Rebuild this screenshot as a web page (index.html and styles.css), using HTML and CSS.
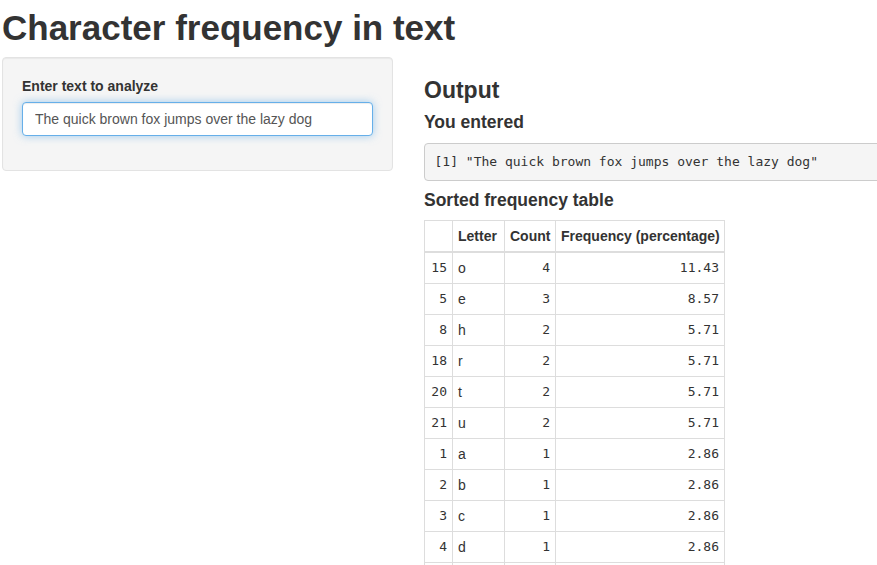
FILE: index.html
```html
<!DOCTYPE html>
<html lang="en">
<head>
<meta charset="utf-8">
<title>Character frequency in text</title>
<link rel="stylesheet" href="styles.css">
</head>
<body>
<div class="page">
  <h1 class="title">Character frequency in text</h1>
  <div class="row">
    <div class="sidebar">
      <div class="well">
        <div class="form-group">
          <label class="control-label" for="txt">Enter text to analyze</label>
          <input id="txt" class="form-control" type="text" value="The quick brown fox jumps over the lazy dog">
        </div>
      </div>
    </div>
    <div class="main">
      <h3 class="h-output">Output</h3>
      <h4 class="h-sub">You entered</h4>
      <pre class="verbatim">[1] "The quick brown fox jumps over the lazy dog"</pre>
      <h4 class="h-sub h-table">Sorted frequency table</h4>
      <table class="freq">
        <colgroup>
          <col class="c-idx"><col class="c-let"><col class="c-cnt"><col class="c-frq">
        </colgroup>
        <thead>
          <tr><th></th><th class="left">Letter</th><th class="right">Count</th><th class="right">Frequency (percentage)</th></tr>
        </thead>
        <tbody>
          <tr><td class="num">15</td><td>o</td><td class="num">4</td><td class="num">11.43</td></tr>
          <tr><td class="num">5</td><td>e</td><td class="num">3</td><td class="num">8.57</td></tr>
          <tr><td class="num">8</td><td>h</td><td class="num">2</td><td class="num">5.71</td></tr>
          <tr><td class="num">18</td><td>r</td><td class="num">2</td><td class="num">5.71</td></tr>
          <tr><td class="num">20</td><td>t</td><td class="num">2</td><td class="num">5.71</td></tr>
          <tr><td class="num">21</td><td>u</td><td class="num">2</td><td class="num">5.71</td></tr>
          <tr><td class="num">1</td><td>a</td><td class="num">1</td><td class="num">2.86</td></tr>
          <tr><td class="num">2</td><td>b</td><td class="num">1</td><td class="num">2.86</td></tr>
          <tr><td class="num">3</td><td>c</td><td class="num">1</td><td class="num">2.86</td></tr>
          <tr><td class="num">4</td><td>d</td><td class="num">1</td><td class="num">2.86</td></tr>
          <tr><td class="num">6</td><td>f</td><td class="num">1</td><td class="num">2.86</td></tr>
          <tr><td class="num">7</td><td>g</td><td class="num">1</td><td class="num">2.86</td></tr>
          <tr><td class="num">9</td><td>i</td><td class="num">1</td><td class="num">2.86</td></tr>
          <tr><td class="num">10</td><td>j</td><td class="num">1</td><td class="num">2.86</td></tr>
        </tbody>
      </table>
    </div>
  </div>
</div>
</body>
</html>
```

FILE: styles.css
```css
html, body {
  margin: 0;
  padding: 0;
  overflow: hidden;
  background: #fff;
}
body {
  font-family: "Liberation Sans", Arial, sans-serif;
  font-size: 14px;
  line-height: 1.42857;
  color: #333;
}
.page {
  padding-left: 2px;
  width: 1240px;
}
.title {
  font-size: 35px;
  font-weight: 700;
  line-height: 39.6px;
  margin: 8px 0 9px;
}
.row {
  display: flex;
  align-items: flex-start;
  gap: 31px;
}
.sidebar {
  width: 391px;
  flex: none;
}
.well {
  background: #f5f5f5;
  border: 1px solid #e3e3e3;
  border-radius: 4px;
  box-shadow: inset 0 1px 1px rgba(0,0,0,.05);
  padding: 19px;
}
.form-group {
  margin-bottom: 15px;
}
.control-label {
  display: inline-block;
  font-weight: 700;
  margin-bottom: 5px;
}
.form-control {
  display: block;
  box-sizing: border-box;
  width: 100%;
  height: 34px;
  padding: 6px 12px;
  font-family: "Liberation Sans", Arial, sans-serif;
  font-size: 14px;
  line-height: 20px;
  color: #555;
  background: #fff;
  border: 1px solid #66afe9;
  border-radius: 4px;
  outline: 0;
  box-shadow: inset 0 1px 1px rgba(0,0,0,.075), 0 0 8px rgba(102,175,233,.6);
}
.main {
  width: 812px;
  flex: none;
}
.h-output {
  font-size: 23px;
  font-weight: 700;
  line-height: 26.4px;
  margin: 20px 0 10px;
}
.h-sub {
  font-size: 17.5px;
  font-weight: 700;
  line-height: 19.8px;
  margin: 10px 0 10px;
}
.h-table {
  margin-bottom: 9px;
}
.verbatim {
  margin: 0 0 10px;
  padding: 9.5px;
  font-family: "DejaVu Sans Mono", Menlo, monospace;
  font-size: 13px;
  line-height: 17px;
  color: #333;
  background: #f5f5f5;
  border: 1px solid #ccc;
  border-radius: 4px;
  white-space: pre;
}
.freq {
  border-collapse: collapse;
  border-spacing: 0;
  table-layout: fixed;
  width: 300px;
  border: 1px solid #ddd;
}
.c-idx { width: 28px; }
.c-let { width: 52px; }
.c-cnt { width: 51px; }
.c-frq { width: 169px; }
.freq th, .freq td {
  padding: 5px;
  line-height: 20px;
  border: 1px solid #ddd;
  vertical-align: top;
  white-space: nowrap;
}
.freq th {
  font-weight: 700;
  border-bottom-width: 2px;
}
.freq .left { text-align: left; }
.freq .right { text-align: right; }
.freq td.num {
  text-align: right;
  font-family: "DejaVu Sans Mono", Menlo, monospace;
  font-size: 13px;
}
```
